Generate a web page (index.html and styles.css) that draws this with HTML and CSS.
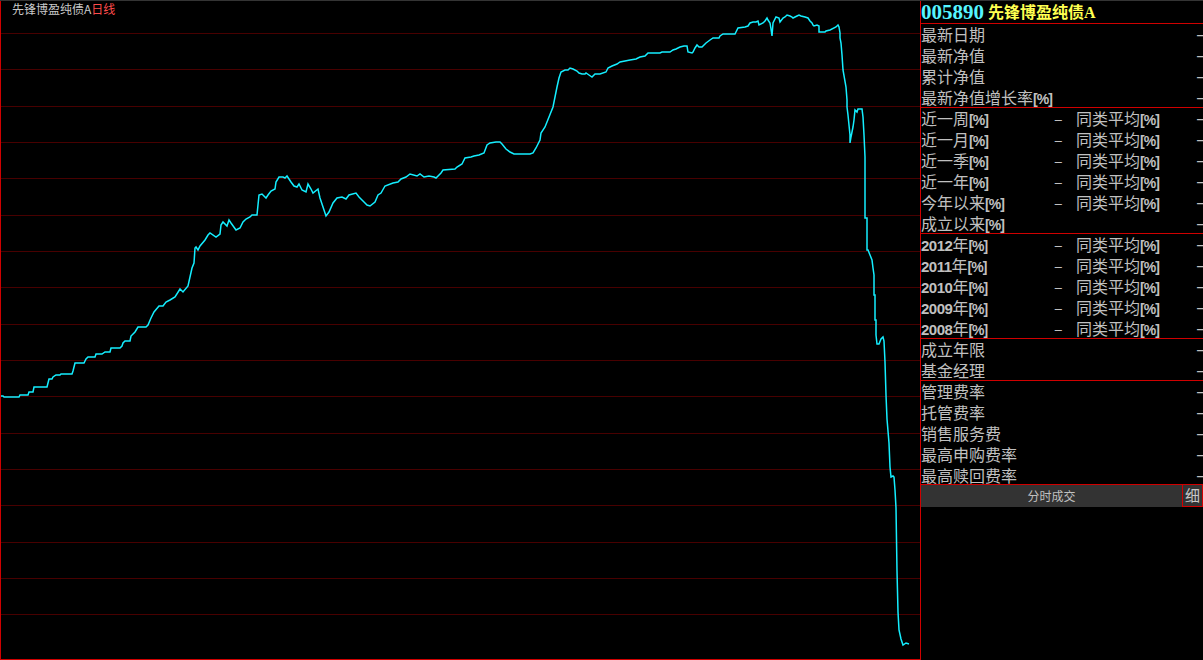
FILE: index.html
```html
<!DOCTYPE html>
<html lang="zh-CN">
<head>
    <meta charset="UTF-8">
    <title>005890 先锋博盈纯债A</title>
    <link rel="stylesheet" href="styles.css">
</head>
<body>
<div class="screen">
    <div class="chart">
        <div class="chart-title">先锋博盈纯债A<span class="period">日线</span></div>
        <svg class="plot" width="919" height="659" viewBox="1 1 919 659">
            <g class="grid">
                <line x1="1" x2="920" y1="33.5" y2="33.5"/>
                <line x1="1" x2="920" y1="69.5" y2="69.5"/>
                <line x1="1" x2="920" y1="106.5" y2="106.5"/>
                <line x1="1" x2="920" y1="142.5" y2="142.5"/>
                <line x1="1" x2="920" y1="178.5" y2="178.5"/>
                <line x1="1" x2="920" y1="215.5" y2="215.5"/>
                <line x1="1" x2="920" y1="251.5" y2="251.5"/>
                <line x1="1" x2="920" y1="287.5" y2="287.5"/>
                <line x1="1" x2="920" y1="324.5" y2="324.5"/>
                <line x1="1" x2="920" y1="360.5" y2="360.5"/>
                <line x1="1" x2="920" y1="396.5" y2="396.5"/>
                <line x1="1" x2="920" y1="433.5" y2="433.5"/>
                <line x1="1" x2="920" y1="469.5" y2="469.5"/>
                <line x1="1" x2="920" y1="505.5" y2="505.5"/>
                <line x1="1" x2="920" y1="542.5" y2="542.5"/>
                <line x1="1" x2="920" y1="578.5" y2="578.5"/>
                <line x1="1" x2="920" y1="614.5" y2="614.5"/>
            </g>
            <line class="base" x1="1" x2="920" y1="659.5" y2="659.5"/>
            <polyline class="nav" points="1,396 3,396 4,397 19,397 20,395 28,395 29,392 33,392 34,387 47,387 49,379 52,379 53,377 56,375 60,375 61,374 72,374 73,371 75,363 84,363 86,359 88,357 95,357 96,354 102,354 105,352 110,352 111,348 120,348 122,346 123,343 125,341 130,341 131,336 135,332 138,327 146,327 148,325 151,318 154,312 159,306 163,306 166,302 170,300 175,297 180,289 183,292 188,286 190,277 192,268 194,263 195,248 196,247 198,250 200,246 205,240 208,235 210,233 216,237 220,234 221,225 223,222 227,226 229,220 231,223 236,230 240,228 243,222 246,219 250,217 252,215 257,215 259,195 262,194 266,198 268,195 271,191 275,189 276,182 279,177 283,177 285,178 287,176 291,182 294,186 297,187 299,184 302,190 306,192 308,184 311,189 313,193 318,189 320,198 323,207 326,216 329,212 333,203 337,198 342,197 346,199 349,195 356,193 359,197 364,202 367,205 370,206 375,202 378,195 381,193 385,186 393,183 398,182 401,179 406,177 410,174 417,176 420,174 424,177 429,176 434,177 436,178 441,173 443,170 455,169 457,167 462,164 465,158 471,157 474,156 479,155 484,153 487,145 490,143 496,142 500,142 502,144 506,149 510,152 514,154 530,154 533,153 536,148 540,140 541,133 545,127 549,117 553,107 555,97 557,87 559,78 561,72 565,70 568,70 570,68 573,69 577,71 579,73 582,74 585,74 586,73 589,75 592,77 595,74 600,74 606,72 608,68 612,66 617,64 620,62 625,61 630,60 636,59 640,57 645,56 648,53 660,53 662,52 670,52 673,50 676,49 680,47 684,46 687,46 688,52 692,53 693,52 695,48 697,45 699,47 702,47 706,43 710,40 713,38 719,38 720,36 723,34 735,34 736,32 738,28 745,27 748,26 750,23 753,22 756,22 758,21 759,25 763,23 765,21 767,18 768,20 770,23 771,29 772,36 773,23 776,17 779,18 780,22 783,18 785,17 787,15 790,16 792,17 793,18 795,17 797,16 799,15 801,16 805,17 808,18 810,21 812,23 813,25 814,26 817,25 819,26 819,32 825,32 826,31 830,30 836,27 838,25 839,27 840,33 840,38 841,43 842,55 843,70 846,87 847,100 847,107 848,115 849,125 850,135 850,143 851,137 852,132 853,127 854,120 855,110 857,112 858,109 862,109 863,117 864,135 865,157 865,218 867,218 867,250 868,250 870,255 872,260 873,268 874,275 874,295 875,295 875,320 876,320 876,335 877,344 879,344 881,339 883,337 884,341 885,362 886,395 887,419 889,443 890,467 891,477 893,476 894,477 895,490 896,508 897,571 898,612 899,630 901,639 903,645 906,643 909,644"/>
        </svg>
    </div>

    <div class="panel">
        <div class="panel-head">
            <span class="code">005890</span>
            <span class="name">先锋博盈纯债<b>A</b></span>
        </div>

        <div class="group">
            <div class="row"><span class="lbl">最新日期</span><span class="end">–</span></div>
            <div class="row"><span class="lbl">最新净值</span><span class="end">–</span></div>
            <div class="row"><span class="lbl">累计净值</span><span class="end">–</span></div>
            <div class="row"><span class="lbl">最新净值增长率<i>[%]</i></span><span class="end">–</span></div>
        </div>

        <div class="group">
            <div class="row"><span class="lbl">近一周<i>[%]</i></span><span class="mid">–</span><span class="avg">同类平均<i>[%]</i></span><span class="end">–</span></div>
            <div class="row"><span class="lbl">近一月<i>[%]</i></span><span class="mid">–</span><span class="avg">同类平均<i>[%]</i></span><span class="end">–</span></div>
            <div class="row"><span class="lbl">近一季<i>[%]</i></span><span class="mid">–</span><span class="avg">同类平均<i>[%]</i></span><span class="end">–</span></div>
            <div class="row"><span class="lbl">近一年<i>[%]</i></span><span class="mid">–</span><span class="avg">同类平均<i>[%]</i></span><span class="end">–</span></div>
            <div class="row"><span class="lbl">今年以来<i>[%]</i></span><span class="mid">–</span><span class="avg">同类平均<i>[%]</i></span><span class="end">–</span></div>
            <div class="row"><span class="lbl">成立以来<i>[%]</i></span><span class="end">–</span></div>
        </div>

        <div class="group">
            <div class="row"><span class="lbl"><em>2012</em>年<i>[%]</i></span><span class="mid">–</span><span class="avg">同类平均<i>[%]</i></span><span class="end">–</span></div>
            <div class="row"><span class="lbl"><em>2011</em>年<i>[%]</i></span><span class="mid">–</span><span class="avg">同类平均<i>[%]</i></span><span class="end">–</span></div>
            <div class="row"><span class="lbl"><em>2010</em>年<i>[%]</i></span><span class="mid">–</span><span class="avg">同类平均<i>[%]</i></span><span class="end">–</span></div>
            <div class="row"><span class="lbl"><em>2009</em>年<i>[%]</i></span><span class="mid">–</span><span class="avg">同类平均<i>[%]</i></span><span class="end">–</span></div>
            <div class="row"><span class="lbl"><em>2008</em>年<i>[%]</i></span><span class="mid">–</span><span class="avg">同类平均<i>[%]</i></span><span class="end">–</span></div>
        </div>

        <div class="group">
            <div class="row"><span class="lbl">成立年限</span><span class="end">–</span></div>
            <div class="row"><span class="lbl">基金经理</span><span class="end">–</span></div>
        </div>

        <div class="group">
            <div class="row"><span class="lbl">管理费率</span><span class="end">–</span></div>
            <div class="row"><span class="lbl">托管费率</span><span class="end">–</span></div>
            <div class="row"><span class="lbl">销售服务费</span><span class="end">–</span></div>
            <div class="row"><span class="lbl">最高申购费率</span><span class="end">–</span></div>
            <div class="row"><span class="lbl">最高赎回费率</span><span class="end">–</span></div>
        </div>

        <div class="btnbar">
            <span class="btn">分时成交</span>
            <span class="fine">细</span>
        </div>
    </div>
</div>
</body>
</html>
```

FILE: styles.css
```css
body {
    margin: 0;
    padding: 0;
    background-color: #000000;
    font-family: "Noto Sans CJK SC", "DejaVu Sans", sans-serif;
    color: #c0c0c0;
}

.screen {
    display: flex;
    width: 1203px;
    height: 660px;
    border-top: 1px solid #343434;
    box-sizing: border-box;
    overflow: hidden;
}

/* chart area */
.chart {
    position: relative;
    width: 920px;
    flex-shrink: 0;
    border-left: 1px solid #d00000;
    box-sizing: border-box;
}

.chart-title {
    position: absolute;
    left: 11px;
    top: 0;
    font-size: 12px;
    line-height: 15px;
    color: #c8c8c8;
}

.chart-title .period {
    color: #ff4c4c;
}

.plot {
    display: block;
}

.grid line {
    stroke: #480000;
    stroke-width: 1;
    shape-rendering: crispEdges;
}

.base {
    stroke: #d00000;
    stroke-width: 1;
    shape-rendering: crispEdges;
}

.nav {
    fill: none;
    stroke: #14eeff;
    stroke-width: 1.5;
    stroke-linejoin: miter;
}

/* info panel */
.panel {
    flex: 1;
    border-left: 1px solid #d00000;
    box-sizing: border-box;
}

.panel-head {
    height: 22px;
    display: flex;
    align-items: center;
    gap: 4px;
    white-space: nowrap;
}

.panel-head .code {
    font-family: "Liberation Serif", serif;
    font-weight: bold;
    font-size: 21px;
    line-height: 22px;
    color: #55f5ff;
}

.panel-head .name {
    font-weight: bold;
    font-size: 16px;
    line-height: 22px;
    color: #ffff50;
}

.panel-head .name b {
    font-family: "Liberation Serif", serif;
    font-size: 16px;
}

.group {
    border-top: 1px solid #d00000;
}

.row {
    display: flex;
    height: 21px;
    line-height: 21px;
    font-size: 16px;
    white-space: nowrap;
    overflow: hidden;
}

/* each group keeps a pitch of 21px per row, the border takes one pixel */
.row:last-child {
    height: 20px;
}

.row i {
    font-style: normal;
    font-weight: bold;
    font-family: "Liberation Sans", sans-serif;
    font-size: 14px;
    letter-spacing: -1px;
}

.row em {
    font-style: normal;
    font-weight: bold;
    font-family: "Liberation Sans", sans-serif;
    font-size: 15px;
    letter-spacing: -0.5px;
}

.row .lbl {
    width: 133px;
    flex-shrink: 0;
}

.row .mid {
    width: 22px;
}

.row .avg {
    flex: 1;
}

.row .lbl:nth-last-child(2) {
    flex: 1;
}

.row .end {
    width: 6px;
    font-family: "Liberation Sans", sans-serif;
}

.btnbar {
    display: flex;
    height: 22px;
    margin-top: -1px;
    border-top: 1px solid #d00000;
    background-color: #333333;
}

.btn {
    flex: 1;
    text-align: center;
    font-size: 12px;
    line-height: 21px;
    color: #c0c0c0;
}

.fine {
    width: 21px;
    margin-top: -1px;
    border: 1px solid #d00000;
    box-sizing: border-box;
    font-size: 15px;
    line-height: 20px;
    text-align: center;
    color: #c8c8c8;
}
```
